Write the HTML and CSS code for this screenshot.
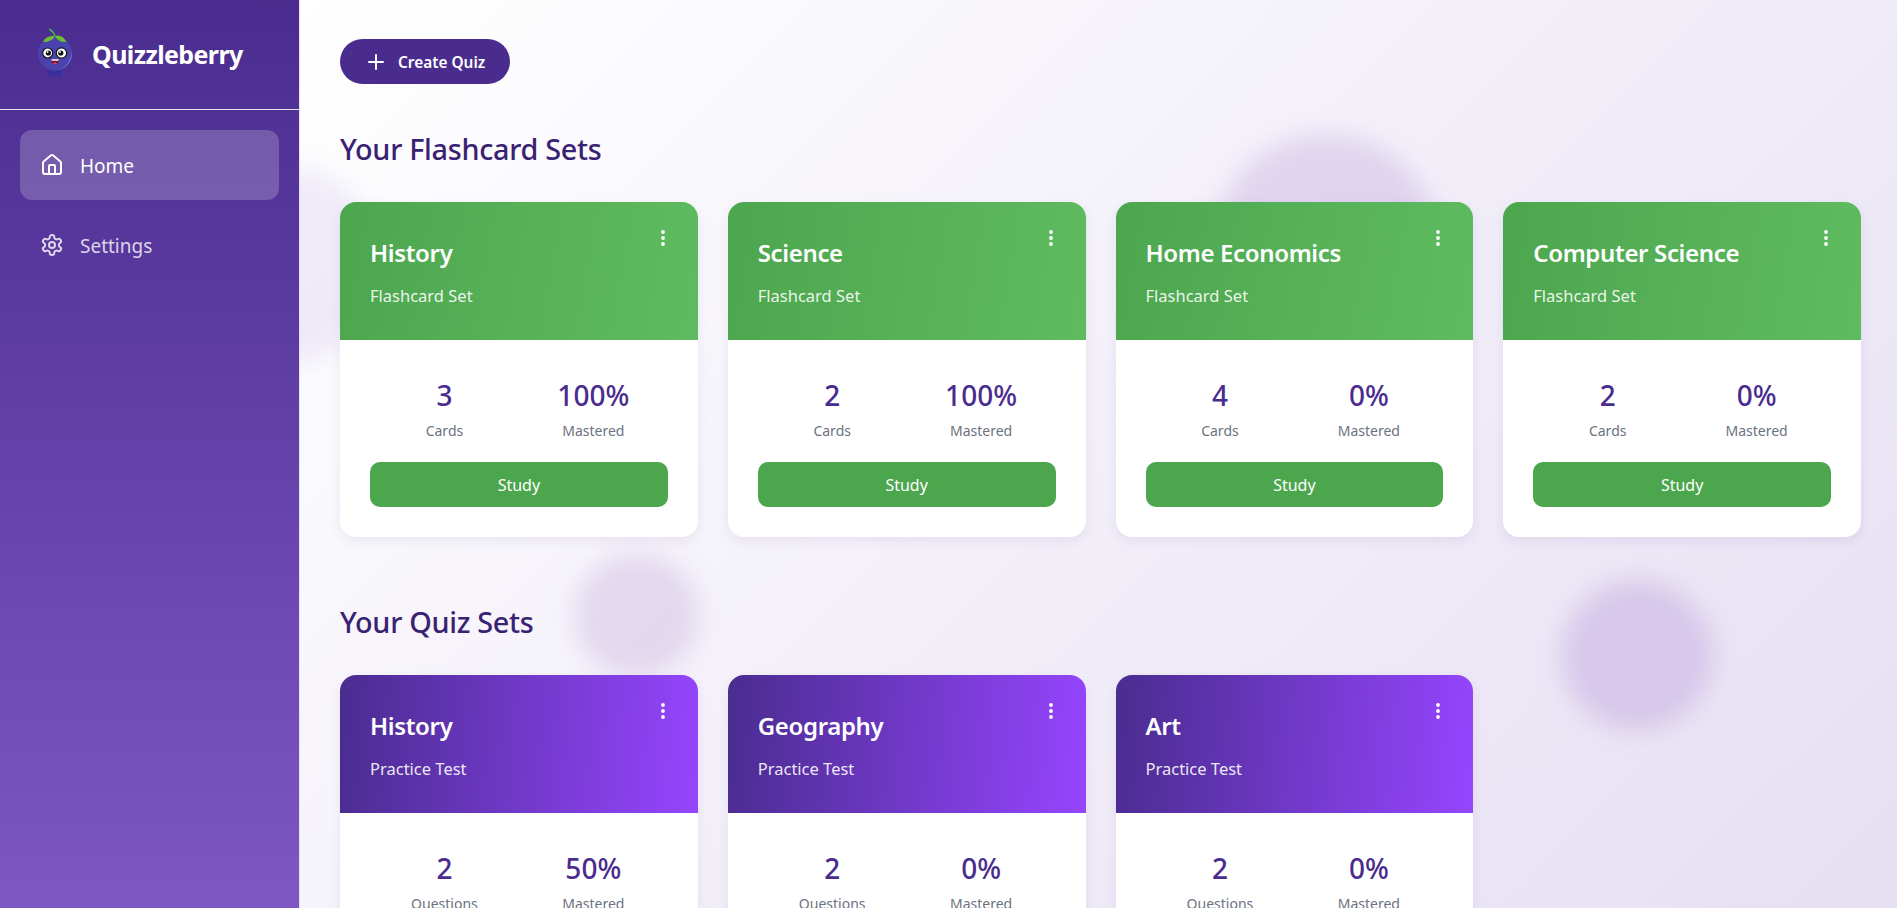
FILE: index.html
```html
<!DOCTYPE html>
<html lang="en">
<head>
<meta charset="utf-8">
<title>Quizzleberry</title>
<link rel="stylesheet" href="styles.css">
</head>
<body>
<div class="app">
  <aside class="sidebar">
    <div class="brand">
      <svg class="logo" viewBox="0 0 40 54" aria-hidden="true">
        <path d="M14 41 L12.5 47 Q15 47.5 16.5 48.5 Q18.5 47 20 48.7 Q21.5 47 23.5 48.5 Q25 47.5 27.5 47 L26 41 Z" fill="#3a2f9e"/>
        <circle cx="20" cy="25.5" r="17" fill="#4a43ad"/>
        <path d="M36.6 22 A17 17 0 0 1 24 42 A20 20 0 0 0 36.6 22Z" fill="#6f7ae0"/>
        <path d="M20 8 Q18.5 3.5 14.3 1" stroke="#4caf50" stroke-width="1.6" fill="none"/>
        <path d="M8 14 Q11 7 20 8 Q17 14 8 14Z" fill="#6cc02f"/>
        <path d="M20 8 Q27 6 31.5 14 Q23 14.5 20 8Z" fill="#6cc02f"/>
        <circle cx="12.7" cy="25" r="5" fill="#fff" stroke="#111" stroke-width="1.2"/>
        <circle cx="26.5" cy="25" r="5.2" fill="#fff" stroke="#111" stroke-width="1.2"/>
        <circle cx="13.4" cy="25" r="2.6" fill="#111"/>
        <circle cx="25.8" cy="25" r="2.6" fill="#111"/>
        <circle cx="12.6" cy="24" r=".9" fill="#fff"/>
        <circle cx="25" cy="24" r=".9" fill="#fff"/>
        <path d="M16 31.3 H24.3 Q23.6 36.3 20.2 36.3 Q16.7 36.3 16 31.3Z" fill="#7a1133"/>
        <path d="M16.4 31.3 H23.9 L23.5 32.8 H16.8Z" fill="#fff"/>
        <path d="M18 35 Q20.2 33.8 22.4 35 Q21 36.3 20.2 36.3 Q19.3 36.3 18 35Z" fill="#e0486a"/>
      </svg>
      <span class="brand-name">Quizzleberry</span>
    </div>
    <nav class="nav">
      <a class="nav-item active">
        <svg class="nav-icon" viewBox="0 0 24 24"><path d="M15 21v-8a1 1 0 0 0-1-1h-4a1 1 0 0 0-1 1v8"/><path d="M3 10a2 2 0 0 1 .709-1.528l7-5.999a2 2 0 0 1 2.582 0l7 5.999A2 2 0 0 1 21 10v9a2 2 0 0 1-2 2H5a2 2 0 0 1-2-2z"/></svg>
        <span class="nav-label">Home</span>
      </a>
      <a class="nav-item">
        <svg class="nav-icon" viewBox="0 0 24 24"><path d="M12.22 2h-.44a2 2 0 0 0-2 2v.18a2 2 0 0 1-1 1.73l-.43.25a2 2 0 0 1-2 0l-.15-.08a2 2 0 0 0-2.73.73l-.22.38a2 2 0 0 0 .73 2.73l.15.1a2 2 0 0 1 1 1.72v.51a2 2 0 0 1-1 1.74l-.15.09a2 2 0 0 0-.73 2.73l.22.38a2 2 0 0 0 2.73.73l.15-.08a2 2 0 0 1 2 0l.43.25a2 2 0 0 1 1 1.73V20a2 2 0 0 0 2 2h.44a2 2 0 0 0 2-2v-.18a2 2 0 0 1 1-1.73l.43-.25a2 2 0 0 1 2 0l.15.08a2 2 0 0 0 2.73-.73l.22-.39a2 2 0 0 0-.73-2.73l-.15-.08a2 2 0 0 1-1-1.74v-.5a2 2 0 0 1 1-1.74l.15-.09a2 2 0 0 0 .73-2.73l-.22-.38a2 2 0 0 0-2.73-.73l-.15.08a2 2 0 0 1-2 0l-.43-.25a2 2 0 0 1-1-1.73V4a2 2 0 0 0-2-2z"/><circle cx="12" cy="12" r="3"/></svg>
        <span class="nav-label">Settings</span>
      </a>
    </nav>
  </aside>

  <main class="main">
    <span class="blob blob-a"></span>
    <span class="blob blob-b"></span>
    <span class="blob blob-c"></span>
    <span class="blob blob-d"></span>

    <button class="create">
      <svg class="plus" viewBox="0 0 24 24"><path d="M5 12h14M12 5v14"/></svg>
      <span class="create-label">Create Quiz</span>
    </button>

    <section class="section">
      <h2 class="section-title">Your Flashcard Sets</h2>
      <div class="grid">
        <article class="card">
          <header class="card-head green"><h3>History</h3><p>Flashcard Set</p><svg class="kebab" viewBox="0 0 4 16"><circle cx="2" cy="2" r="1.9"/><circle cx="2" cy="8" r="1.9"/><circle cx="2" cy="14" r="1.9"/></svg></header>
          <div class="card-body">
            <div class="stats"><div class="stat"><b>3</b><small>Cards</small></div><div class="stat"><b>100%</b><small>Mastered</small></div></div>
            <button class="study">Study</button>
          </div>
        </article>
        <article class="card">
          <header class="card-head green"><h3>Science</h3><p>Flashcard Set</p><svg class="kebab" viewBox="0 0 4 16"><circle cx="2" cy="2" r="1.9"/><circle cx="2" cy="8" r="1.9"/><circle cx="2" cy="14" r="1.9"/></svg></header>
          <div class="card-body">
            <div class="stats"><div class="stat"><b>2</b><small>Cards</small></div><div class="stat"><b>100%</b><small>Mastered</small></div></div>
            <button class="study">Study</button>
          </div>
        </article>
        <article class="card">
          <header class="card-head green"><h3>Home Economics</h3><p>Flashcard Set</p><svg class="kebab" viewBox="0 0 4 16"><circle cx="2" cy="2" r="1.9"/><circle cx="2" cy="8" r="1.9"/><circle cx="2" cy="14" r="1.9"/></svg></header>
          <div class="card-body">
            <div class="stats"><div class="stat"><b>4</b><small>Cards</small></div><div class="stat"><b>0%</b><small>Mastered</small></div></div>
            <button class="study">Study</button>
          </div>
        </article>
        <article class="card">
          <header class="card-head green"><h3>Computer Science</h3><p>Flashcard Set</p><svg class="kebab" viewBox="0 0 4 16"><circle cx="2" cy="2" r="1.9"/><circle cx="2" cy="8" r="1.9"/><circle cx="2" cy="14" r="1.9"/></svg></header>
          <div class="card-body">
            <div class="stats"><div class="stat"><b>2</b><small>Cards</small></div><div class="stat"><b>0%</b><small>Mastered</small></div></div>
            <button class="study">Study</button>
          </div>
        </article>
      </div>
    </section>

    <section class="section">
      <h2 class="section-title">Your Quiz Sets</h2>
      <div class="grid">
        <article class="card">
          <header class="card-head purple"><h3>History</h3><p>Practice Test</p><svg class="kebab" viewBox="0 0 4 16"><circle cx="2" cy="2" r="1.9"/><circle cx="2" cy="8" r="1.9"/><circle cx="2" cy="14" r="1.9"/></svg></header>
          <div class="card-body">
            <div class="stats"><div class="stat"><b>2</b><small>Questions</small></div><div class="stat"><b>50%</b><small>Mastered</small></div></div>
          </div>
        </article>
        <article class="card">
          <header class="card-head purple"><h3>Geography</h3><p>Practice Test</p><svg class="kebab" viewBox="0 0 4 16"><circle cx="2" cy="2" r="1.9"/><circle cx="2" cy="8" r="1.9"/><circle cx="2" cy="14" r="1.9"/></svg></header>
          <div class="card-body">
            <div class="stats"><div class="stat"><b>2</b><small>Questions</small></div><div class="stat"><b>0%</b><small>Mastered</small></div></div>
          </div>
        </article>
        <article class="card">
          <header class="card-head purple"><h3>Art</h3><p>Practice Test</p><svg class="kebab" viewBox="0 0 4 16"><circle cx="2" cy="2" r="1.9"/><circle cx="2" cy="8" r="1.9"/><circle cx="2" cy="14" r="1.9"/></svg></header>
          <div class="card-body">
            <div class="stats"><div class="stat"><b>2</b><small>Questions</small></div><div class="stat"><b>0%</b><small>Mastered</small></div></div>
          </div>
        </article>
      </div>
    </section>
  </main>
</div>
</body>
</html>
```
FILE: styles.css
```css
* { box-sizing: border-box; }
html, body { margin: 0; height: 100%; overflow: hidden; }
body { font-family: "Noto Sans", "Open Sans", sans-serif; color: #4a2c8f; }
.app { display: flex; height: 908px; }

.sidebar {
  width: 300px; flex: none;
  background: linear-gradient(180deg, #4a2c8f 0%, #7e57c2 100%);
  border-right: 1px solid #e9def8;
  color: #fff;
  position: relative; z-index: 2;
}
.brand {
  height: 110px; display: flex; align-items: center; gap: 17px;
  padding: 0 0 0 35px;
  border-bottom: 1px solid rgba(255,255,255,.85);
}
.logo { flex: none; width: 40px; height: 54px; }
.brand-name { font-size: 25px; font-weight: 700; letter-spacing: -.6px; margin-top: -2px; }
.nav { padding: 20px; display: flex; flex-direction: column; gap: 10px; }
.nav-item {
  height: 70px; display: flex; align-items: center; gap: 16px;
  padding: 0 20px; border-radius: 12px;
  font-size: 19px; color: rgba(255,255,255,.8);
}
.nav-label { padding-top: 2px; }
.nav-item.active { background: rgba(255,255,255,.2); color: #fff; }
.nav-icon { width: 24px; height: 24px; fill: none; stroke: currentColor; stroke-width: 2; stroke-linecap: round; stroke-linejoin: round; flex: none; }

.main {
  flex: 1; min-width: 0; position: relative; overflow: hidden;
  padding: 39px 36px 0 40px;
  background: linear-gradient(135deg, #ffffff 0%, #e6dff2 100%);
}
.blob { position: absolute; border-radius: 50%; filter: blur(12px); background: rgba(130,80,190,.17); }
.blob-a { left: 913px; top: 135px; width: 226px; height: 226px; }
.blob-b { left: 274px; top: 553px; width: 124px; height: 124px; background: rgba(130,80,180,.16); }
.blob-c { left: 1262px; top: 580px; width: 150px; height: 150px; background: rgba(135,80,195,.2); }
.blob-d { left: -120px; top: 165px; width: 200px; height: 200px; background: rgba(126,87,194,.1); }

.create {
  position: relative; display: inline-flex; align-items: center; gap: 10px;
  height: 45px; width: 170px; padding: 0 0 0 24px; border: 0; border-radius: 23px;
  background: #4a2c8f; color: #fff; font: 600 15.4px "Noto Sans", sans-serif;
}
.create-label { padding-top: 2px; }
.plus { width: 24px; height: 24px; fill: none; stroke: #fff; stroke-width: 2; stroke-linecap: round; flex: none; }

.section { position: relative; margin-top: 45px; }
.section + .section { margin-top: 65px; }
.section-title { margin: 0 0 33px; font-size: 28.8px; line-height: 40px; font-weight: 500; letter-spacing: -.3px; color: #3a2272; }
.grid { display: grid; grid-template-columns: repeat(4, minmax(0, 1fr)); gap: 30px; }

.card { background: #fff; border-radius: 16px; overflow: hidden; box-shadow: 0 4px 12px rgba(74,44,143,.08); }
.card-head { height: 138px; padding: 34px 30px 0; position: relative; color: #fff; }
.card-head.green { background: linear-gradient(100deg, #4ca64e, #5fbb60); }
.card-head.purple { background: linear-gradient(95deg, #4a2c8f, #9645ff); }
.card-head h3 { margin: 0 0 15px; font-size: 24px; line-height: 34px; font-weight: 600; letter-spacing: -.35px; }
.card-head p { margin: 0; font-size: 16.5px; line-height: 22px; color: rgba(255,255,255,.9); }
.kebab { position: absolute; top: 28px; right: 33px; width: 4px; height: 16px; fill: #fff; }

.card-body { padding: 36px 30px 30px; }
.stats { display: flex; justify-content: space-around; margin-bottom: 20px; }
.stat { display: flex; flex-direction: column; align-items: center; min-width: 100px; }
.stat b { font-size: 28px; line-height: 38px; font-weight: 500; color: #4a2c8f; }
.stat small { font-size: 14px; line-height: 22px; color: #6b7280; margin-top: 6px; }
.study {
  width: 100%; height: 45px; border: 0; border-radius: 10px;
  background: #4ca64e; color: #fff; font: 400 16px "Noto Sans", sans-serif;
}
```
